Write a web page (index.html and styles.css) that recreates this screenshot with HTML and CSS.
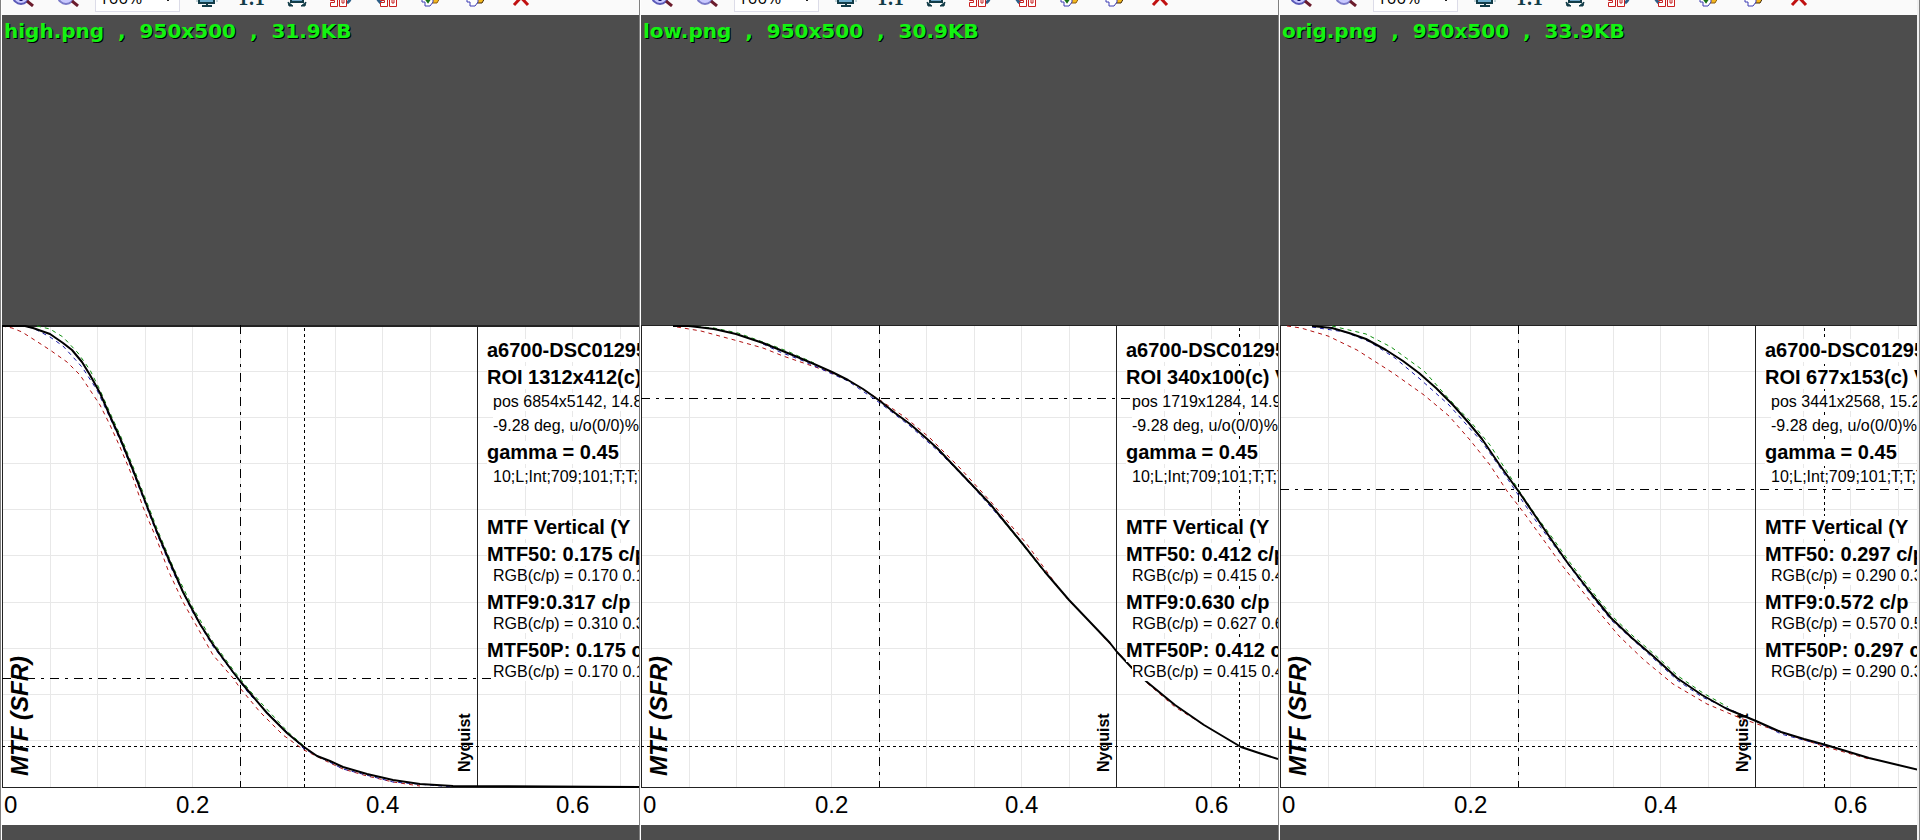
FILE: index.html
```
<!DOCTYPE html>
<html lang="en">
<head>
    <meta charset="UTF-8">
    <meta name="viewport" content="width=device-width, initial-scale=1.0">
    <title>Image Compare</title>
    <link rel="stylesheet" href="styles.css">
</head>
<body>

    <!-- Shared icons and chart parts -->
    <svg class="defs" width="0" height="0" aria-hidden="true">
        <symbol id="zoom-in" viewBox="0 0 24 24">
            <circle cx="8" cy="13" r="8" fill="#c9c9ff" stroke="#5a5ab8" stroke-width="2"/>
            <path d="M4 12h8M8 8v10" stroke="#14146e" stroke-width="3"/>
            <path d="M14 18l6 5" stroke="#6b1c2c" stroke-width="3"/>
        </symbol>
        <symbol id="zoom-out" viewBox="0 0 24 24">
            <circle cx="8" cy="13" r="8" fill="#c9c9ff" stroke="#7a7ac8" stroke-width="2"/>
            <path d="M4 12h8" stroke="#14146e" stroke-width="3"/>
            <path d="M14 18l6 5" stroke="#6b1c2c" stroke-width="3"/>
        </symbol>
        <symbol id="screen" viewBox="0 0 24 24">
            <path d="M4 4h15v16H4z" fill="#6fb0d0" stroke="#123c48" stroke-width="2"/>
            <path d="M12 19v4M7 23h10" stroke="#123c48" stroke-width="2"/>
            <path d="M2 15v4M22 15v4" stroke="#8fb0b8" stroke-width="1"/>
        </symbol>
        <symbol id="fit" viewBox="0 0 24 24">
            <path d="M6 4h12v15H6z" fill="#6fa6c8" stroke="#123c48" stroke-width="2"/>
            <path d="M3 19l1 4h4zM21 19l-1 4h-4z" fill="#123c48" stroke="#123c48" stroke-width="1"/>
        </symbol>
        <symbol id="ninety" viewBox="0 0 17 14">
            <path d="M.5.5h7v13h-7v-4h4v-2h-4zM9.500.5h7v13h-7z" fill="#fff" stroke="#c82020" stroke-width="1"/>
            <path d="M2.500 3h3v2h-3zM12 4h2v6h-2z" fill="none" stroke="#c82020" stroke-width="1"/>
        </symbol>
        <symbol id="rotate-left" viewBox="0 0 24 24">
            <path d="M18 8q5 8-1 12" fill="none" stroke="#2c5f88" stroke-width="3"/>
            <use href="#ninety" x="0" y="10" width="17" height="14"/>
        </symbol>
        <symbol id="rotate-right" viewBox="0 0 24 24">
            <path d="M4 8q-5 6 2 12" fill="none" stroke="#2c5f88" stroke-width="3"/>
            <use href="#ninety" x="5" y="10" width="17" height="14"/>
        </symbol>
        <symbol id="page-check" viewBox="0 0 24 24">
            <path d="M12 13h9l-4 7h-5z" fill="#f5b81c" stroke="#8a5a10"/>
            <path d="M2 6h11v13l-3 4H5v-4H2z" fill="#fff" stroke="#3c3cb4" stroke-width="1"/>
            <path d="M5 15l3 4 4-6" fill="none" stroke="#187018" stroke-width="2"/>
        </symbol>
        <symbol id="page-edit" viewBox="0 0 24 24">
            <path d="M12 13h9l-4 7h-5z" fill="#f5b81c" stroke="#402808"/>
            <path d="M2 6h11v13l-3 4H5v-4H2z" fill="#fff" stroke="#3c3cb4" stroke-width="1"/>
        </symbol>
        <symbol id="cross" viewBox="0 0 24 24">
            <path d="M4 7l14 15M18 7L4 22" stroke="#c01010" stroke-width="3"/>
        </symbol>
        <symbol id="caret" viewBox="0 0 8 5">
            <path d="M1 1l3 3 3-3" fill="none" stroke="#222" stroke-width="1"/>
        </symbol>

        <g id="plot-base">
            <path class="grid" d="M48.5 1v461M95.5 1v461M143.5 1v461M190.5 1v461M238.5 1v461M285.5 1v461M333.5 1v461M380.5 1v461M428.5 1v461M523.5 1v461M570.5 1v461M618.5 1v461M0 46.5h950M0 92.5h950M0 138.5h950M0 184.5h950M0 230.5h950M0 277.5h950M0 323.5h950M0 369.5h950M0 415.5h950"/>
            <path class="axis" d="M.5 0v462M0 .5h950M0 462.5h950M475.5 0v462"/>
            <text class="axis-title" transform="translate(26 451) rotate(-90)">MTF (SFR)</text>
            <text class="nyquist" transform="translate(468 447) rotate(-90)">Nyquist</text>
            <text class="tick" x="2" y="488">0</text>
            <text class="tick" x="174" y="488">0.2</text>
            <text class="tick" x="364" y="488">0.4</text>
            <text class="tick" x="554" y="488">0.6</text>
        </g>
    </svg>

    <main class="compare">
        <section class="panel">
            <div class="toolbar">
                <button type="button" aria-label="Zoom in"><svg><use href="#zoom-in"/></svg></button>
                <button type="button" aria-label="Zoom out"><svg><use href="#zoom-out"/></svg></button>
                <div class="zoom">
                    <select aria-label="Zoom level"><option>100%</option></select>
                    <svg class="caret"><use href="#caret"/></svg>
                </div>
                <button type="button" aria-label="Full screen"><svg><use href="#screen"/></svg></button>
                <button type="button" class="actual">1:1</button>
                <button type="button" aria-label="Fit"><svg><use href="#fit"/></svg></button>
                <button type="button" aria-label="Rotate left"><svg><use href="#rotate-left"/></svg></button>
                <button type="button" aria-label="Rotate right"><svg><use href="#rotate-right"/></svg></button>
                <button type="button" aria-label="Mark"><svg><use href="#page-check"/></svg></button>
                <button type="button" aria-label="Edit"><svg><use href="#page-edit"/></svg></button>
                <button type="button" aria-label="Delete"><svg><use href="#cross"/></svg></button>
            </div>
            <div class="viewer">
                <h2>high.png  ,  950x500  ,  31.9KB</h2>
                <div class="image">
                    <svg class="chart" width="950" height="500">
                        <use href="#plot-base"/>
                        <path class="axis" d="M0 1.5h950"/>
                        <path class="dashdot" d="M0 353.5h950M238.5 0v462"/>
                        <path class="dotted" d="M0 421.5h950M302.5 3v459"/>
                        <polyline class="red" points="0,1 10,3 20,7 31,14 48,25 65,37 78,50 86,62 98,80 108,100 118,122 131,153 141,182 155,215 166,245 181,277 198,307 211,330 231,353 238,363 258,387 281,410 302,425 328,438 341,444 365,451 391,457 418,461"/>
                        <polyline class="blue" points="18,1 31,3 48,12 61,21 80,42 95,65 108,93 118,115 131,147 155,209 171,247 190,286 210,320 248,370 302,424 341,444 391,457 451,462"/>
                        <polyline class="green" points="35,1 48,4 61,12 76,28 88,45 98,65 109,90 119,112 132,144 144,175 156,206 172,244 191,283 211,317 232,346 249,367 286,407 302,421"/>
                        <polyline class="luma" points="0,1 23,1 31,3 48,9 61,18 70,25 80,37 88,50 98,68 108,91 118,113 131,145 143,176 155,207 167,235 181,267 190,284 198,299 210,318 220,332 231,347 238,356 248,368 265,388 285,408 302,422 315,431 328,436 341,442 365,449 391,455 418,459 451,461 637,462"/>
                    </svg>
                    <div class="info">
                        <p class="big">a6700-DSC01295</p>
                        <p class="big">ROI 1312x412(c) V</p>
                        <p class="detail">pos 6854x5142, 14.8</p>
                        <p class="detail">-9.28 deg, u/o(0/0)%,</p>
                        <p class="big">gamma = 0.45</p>
                        <p class="detail">10;L;Int;709;101;T;T;T</p>
                        <p class="big results">MTF Vertical (Y</p>
                        <p class="big">MTF50: 0.175 c/p</p>
                        <p class="rgb">RGB(c/p) = 0.170 0.17</p>
                        <p class="big">MTF9:0.317 c/p</p>
                        <p class="rgb">RGB(c/p) = 0.310 0.31</p>
                        <p class="big">MTF50P: 0.175 c/p</p>
                        <p class="rgb">RGB(c/p) = 0.170 0.17</p>
                    </div>
                </div>
            </div>
        </section>

        <section class="panel">
            <div class="toolbar">
                <button type="button" aria-label="Zoom in"><svg><use href="#zoom-in"/></svg></button>
                <button type="button" aria-label="Zoom out"><svg><use href="#zoom-out"/></svg></button>
                <div class="zoom">
                    <select aria-label="Zoom level"><option>100%</option></select>
                    <svg class="caret"><use href="#caret"/></svg>
                </div>
                <button type="button" aria-label="Full screen"><svg><use href="#screen"/></svg></button>
                <button type="button" class="actual">1:1</button>
                <button type="button" aria-label="Fit"><svg><use href="#fit"/></svg></button>
                <button type="button" aria-label="Rotate left"><svg><use href="#rotate-left"/></svg></button>
                <button type="button" aria-label="Rotate right"><svg><use href="#rotate-right"/></svg></button>
                <button type="button" aria-label="Mark"><svg><use href="#page-check"/></svg></button>
                <button type="button" aria-label="Edit"><svg><use href="#page-edit"/></svg></button>
                <button type="button" aria-label="Delete"><svg><use href="#cross"/></svg></button>
            </div>
            <div class="viewer">
                <h2>low.png  ,  950x500  ,  30.9KB</h2>
                <div class="image">
                    <svg class="chart" width="950" height="500">
                        <use href="#plot-base"/>
                        <path class="dashdot" d="M0 73.5h950M238.5 0v462"/>
                        <path class="dotted" d="M0 421.5h950M598.5 3v459"/>
                        <polyline class="red" points="36,2 60,6 97,16 122,23 142,31 183,45 207,55 239,75 265,93 289,113 318,142 350,177 367,197 385,218 412,255 428,276 449,297 469,319 506,358 534,382 563,400"/>
                        <polyline class="blue" points="122,19 139,27 160,35 207,56 239,78 269,101 297,126 314,143 334,164 363,197"/>
                        <polyline class="green" points="48,1 73,3 97,8 122,17 146,26 173,38"/>
                        <polyline class="green" points="363,197 381,219 404,248"/>
                        <polyline class="luma" points="32,1 48,1 73,4 95,9 122,18 154,31 173,39 191,47 207,55 222,64 239,76 254,88 269,99 285,113 297,124 314,142 334,163 350,180 363,196 381,218 404,247 428,275 449,297 469,318 476,327 491,343 506,357 534,380 563,400 600,422 618,428 637,434"/>
                    </svg>
                    <div class="info">
                        <p class="big">a6700-DSC01295</p>
                        <p class="big">ROI 340x100(c) V</p>
                        <p class="detail">pos 1719x1284, 14.9</p>
                        <p class="detail">-9.28 deg, u/o(0/0)%,</p>
                        <p class="big">gamma = 0.45</p>
                        <p class="detail">10;L;Int;709;101;T;T;T</p>
                        <p class="big results">MTF Vertical (Y</p>
                        <p class="big">MTF50: 0.412 c/p</p>
                        <p class="rgb">RGB(c/p) = 0.415 0.41</p>
                        <p class="big">MTF9:0.630 c/p</p>
                        <p class="rgb">RGB(c/p) = 0.627 0.63</p>
                        <p class="big">MTF50P: 0.412 c/p</p>
                        <p class="rgb">RGB(c/p) = 0.415 0.41</p>
                    </div>
                </div>
            </div>
        </section>

        <section class="panel">
            <div class="toolbar">
                <button type="button" aria-label="Zoom in"><svg><use href="#zoom-in"/></svg></button>
                <button type="button" aria-label="Zoom out"><svg><use href="#zoom-out"/></svg></button>
                <div class="zoom">
                    <select aria-label="Zoom level"><option>100%</option></select>
                    <svg class="caret"><use href="#caret"/></svg>
                </div>
                <button type="button" aria-label="Full screen"><svg><use href="#screen"/></svg></button>
                <button type="button" class="actual">1:1</button>
                <button type="button" aria-label="Fit"><svg><use href="#fit"/></svg></button>
                <button type="button" aria-label="Rotate left"><svg><use href="#rotate-left"/></svg></button>
                <button type="button" aria-label="Rotate right"><svg><use href="#rotate-right"/></svg></button>
                <button type="button" aria-label="Mark"><svg><use href="#page-check"/></svg></button>
                <button type="button" aria-label="Edit"><svg><use href="#page-edit"/></svg></button>
                <button type="button" aria-label="Delete"><svg><use href="#cross"/></svg></button>
            </div>
            <div class="viewer">
                <h2>orig.png  ,  950x500  ,  33.9KB</h2>
                <div class="image">
                    <svg class="chart" width="950" height="500">
                        <use href="#plot-base"/>
                        <path class="dashdot" d="M0 164.5h950M238.5 0v462"/>
                        <path class="dotted" d="M0 421.5h950M544.5 3v459"/>
                        <polyline class="red" points="7,1 21,3 48,11 77,25 113,48 144,70 169,91 190,115 210,140 227,166 244,188 260,210 281,239 314,281 339,311 364,335 393,359 427,379 460,393 506,409 546,422 589,434"/>
                        <polyline class="blue" points="32,2 65,7 90,17 115,33 140,54 169,80 202,117 219,141 239,171 256,196 273,219 310,269 331,295 373,333 397,355 422,372 476,396 501,409 546,421"/>
                        <polyline class="green" points="52,1 86,9 111,22 144,46 169,74 190,96 210,120 240,167 257,192 274,215 288,235 311,265 332,291 353,311 374,329 398,351 423,368 448,382"/>
                        <polyline class="luma" points="32,1 52,3 69,8 86,14 106,25 123,36 139,48 156,63 173,80 188,97 202,114 219,139 239,167 256,192 273,217 287,237 310,267 331,293 352,313 373,331 397,353 422,370 447,384 476,396 501,407 524,414 546,420 589,433 614,439 639,445"/>
                    </svg>
                    <div class="info">
                        <p class="big">a6700-DSC01295</p>
                        <p class="big">ROI 677x153(c) V</p>
                        <p class="detail">pos 3441x2568, 15.2</p>
                        <p class="detail">-9.28 deg, u/o(0/0)%,</p>
                        <p class="big">gamma = 0.45</p>
                        <p class="detail">10;L;Int;709;101;T;T;T</p>
                        <p class="big results">MTF Vertical (Y</p>
                        <p class="big">MTF50: 0.297 c/p</p>
                        <p class="rgb">RGB(c/p) = 0.290 0.30</p>
                        <p class="big">MTF9:0.572 c/p</p>
                        <p class="rgb">RGB(c/p) = 0.570 0.57</p>
                        <p class="big">MTF50P: 0.297 c/p</p>
                        <p class="rgb">RGB(c/p) = 0.290 0.30</p>
                    </div>
                </div>
            </div>
        </section>
    </main>

</body>
</html>
```
FILE: styles.css
```
body {
    margin: 0;
    background-color: #f0f0f0;
    font-family: "Liberation Sans", Arial, sans-serif;
    color: #000;
}
.defs {
    display: block;
}
.compare {
    display: flex;
    min-height: 100vh;
    padding-right: 2px;
    border-right: 1px solid #808080;
    box-sizing: border-box;
}
.panel {
    flex: 1;
    min-width: 0;
    display: flex;
    flex-direction: column;
    overflow: hidden;
    border-left: 1px solid #808080;
    padding-left: 1px;
    background-color: #fff;
}

/* Toolbar */
.toolbar {
    display: flex;
    align-items: flex-end;
    height: 15px;
    overflow: hidden;
    background-color: #fafafa;
}
.toolbar button {
    flex: 0 0 45px;
    height: 32px;
    padding: 0 0 8px;
    border: none;
    background: none;
}
.toolbar button svg {
    display: block;
    width: 24px;
    height: 24px;
    margin: 0 auto;
}
.toolbar .actual {
    padding-bottom: 2px;
    font-family: "Liberation Serif", serif;
    font-size: 20px;
    font-weight: bold;
    color: #123c48;
}
.zoom {
    position: relative;
    flex: 0 0 85px;
    margin: 0 4px 3px 3px;
}
.zoom select {
    display: block;
    width: 100%;
    height: 30px;
    padding: 0 3px;
    border: 1px solid #dcdce8;
    background-color: #fff;
    font-family: "Open Sans", sans-serif;
    font-size: 17px;
    color: #000;
    appearance: none;
}
.zoom .caret {
    position: absolute;
    right: 8px;
    bottom: 10px;
    width: 8px;
    height: 5px;
}

/* Image area */
.viewer {
    flex: 1;
    display: flex;
    flex-direction: column;
    justify-content: space-between;
    padding-bottom: 15px;
    background-color: #4d4d4d;
}
.viewer h2 {
    margin: 0;
    padding: 4px 2px;
    font-family: "DejaVu Sans", Verdana, sans-serif;
    font-size: 20px;
    line-height: 24px;
    white-space: pre;
    color: #12f312;
    text-shadow: 1px 1px 0 #000;
}
.image {
    position: relative;
    background-color: #fff;
    overflow: hidden;
}
.chart {
    display: block;
}
.grid, .axis, .dashdot, .dotted {
    fill: none;
    stroke-width: 1px;
    shape-rendering: crispEdges;
}
.grid {
    stroke: #e8e8e8;
}
.axis {
    stroke: #222;
}
.dashdot {
    stroke: #000;
    stroke-dasharray: 9 6 3 6;
}
.dotted {
    stroke: #000;
    stroke-dasharray: 3 3;
}
.red, .green, .blue, .luma {
    fill: none;
    stroke-width: 1px;
    stroke-linejoin: round;
}
.red {
    stroke: #b01010;
    stroke-dasharray: 4 4;
}
.green {
    stroke: #109010;
    stroke-dasharray: 4 4;
}
.blue {
    stroke: #1818a8;
    stroke-dasharray: 4 4;
}
.luma {
    stroke: #000;
    stroke-width: 2px;
}
.tick {
    font-size: 24px;
}
.axis-title {
    font-size: 24px;
    font-weight: bold;
    font-style: italic;
}
.nyquist {
    font-size: 16px;
    font-weight: bold;
}

/* Text printed over the plot */
.info {
    position: absolute;
    top: 14px;
    left: 485px;
    display: flex;
    flex-direction: column;
    align-items: flex-start;
    white-space: nowrap;
}
.info p {
    margin: 0;
    background-color: #fff;
}
.info .big {
    margin-bottom: 4px;
    font-size: 20px;
    line-height: 23px;
    font-weight: bold;
}
.info .detail, .info .rgb {
    margin-left: 6px;
    font-size: 16px;
    line-height: 18px;
}
.info .detail {
    margin-bottom: 6px;
}
.info .rgb {
    margin-top: -3px;
    margin-bottom: 6px;
}
.info .results {
    margin-top: 24px;
}
```
